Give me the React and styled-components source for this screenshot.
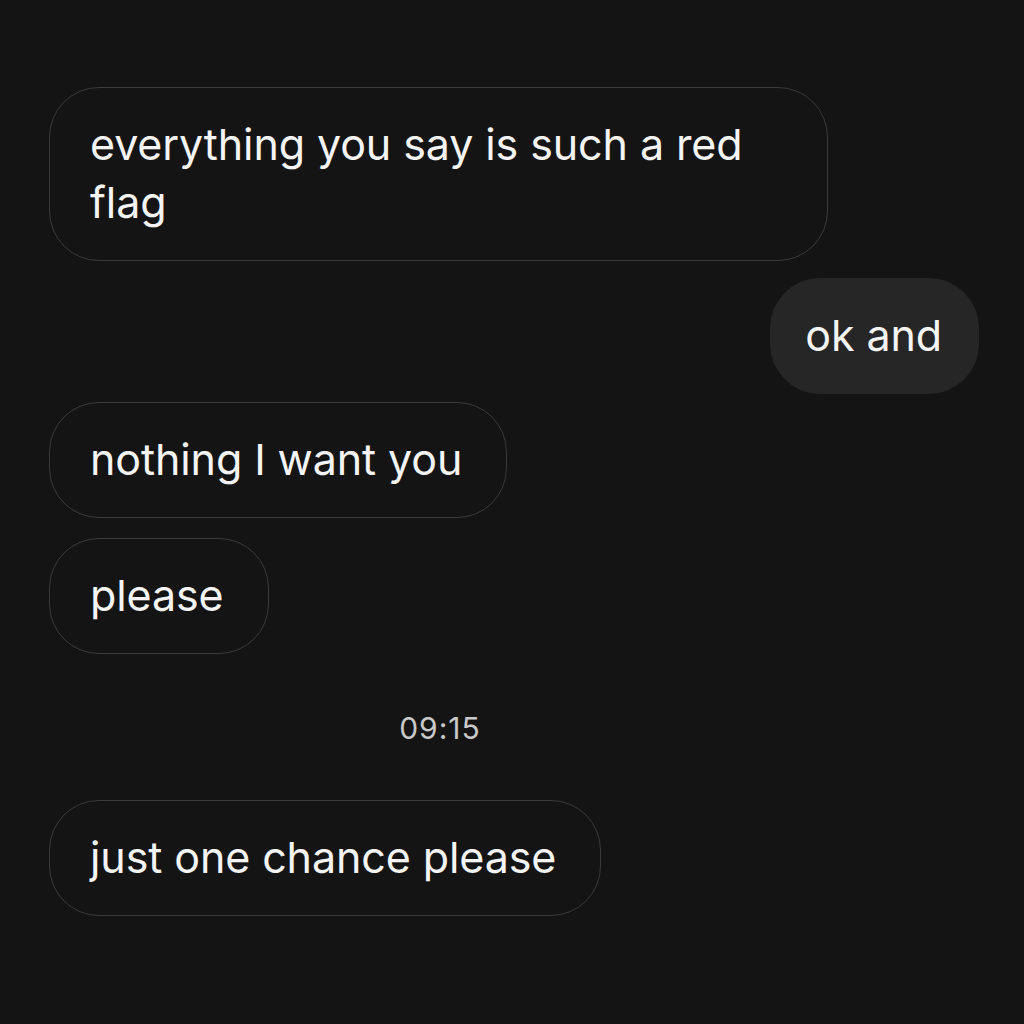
import React from 'react';
import styled, { createGlobalStyle, css } from 'styled-components';

const GlobalStyle = createGlobalStyle`
    html, body {
        margin: 0;
        padding: 0;
        background-color: #141414;
    }
    body {
        font-family: Inter, "Noto Sans", "Liberation Sans", sans-serif;
        -webkit-font-smoothing: antialiased;
    }
`

const Screen = styled.div`
    width: 1024px;
    height: 1024px;
    box-sizing: border-box;
    padding: 87px 45px 0 49px;
    background-color: #141414;
    display: flex;
    flex-direction: column;
    overflow: hidden;
`

const Row = styled.div`
    display: flex;
    justify-content: ${props => props.mine ? 'flex-end' : 'flex-start'};
    margin-top: ${props => props.gap || 0}px;
`

const Bubble = styled.div`
    box-sizing: border-box;
    max-width: 779px;
    padding: 27px 44px 29px 40px;
    border-radius: 50px;
    font-size: 43px;
    line-height: 58px;
    letter-spacing: -0.1px;
    color: #f4f4f4;
    border: 1px solid #3b3b3b;
    background-color: #141414;
    ${props => props.mine && css`
        border-color: #262626;
        background-color: #262626;
        padding: 27px 36px 29px 34px;
    `}
`

const Timestamp = styled.div`
    width: 782px;
    margin: 56px 0 0;
    text-align: center;
    font-size: 30px;
    line-height: 36px;
    letter-spacing: 1px;
    color: #c9c9c9;
`

const messages = [
    { id: 1, text: 'everything you say is such a red flag', gap: 0 },
    { id: 2, text: 'ok and', mine: true, gap: 17 },
    { id: 3, text: 'nothing I want you', gap: 8 },
    { id: 4, text: 'please', gap: 20 },
]

export default function App() {
    return (
        <>
            <GlobalStyle />
            <Screen>
                {messages.map(m => (
                    <Row key={m.id} mine={m.mine} gap={m.gap}>
                        <Bubble mine={m.mine}>{m.text}</Bubble>
                    </Row>
                ))}
                <Timestamp>09:15</Timestamp>
                <Row gap={54}>
                    <Bubble>just one chance please</Bubble>
                </Row>
            </Screen>
        </>
    );
}
